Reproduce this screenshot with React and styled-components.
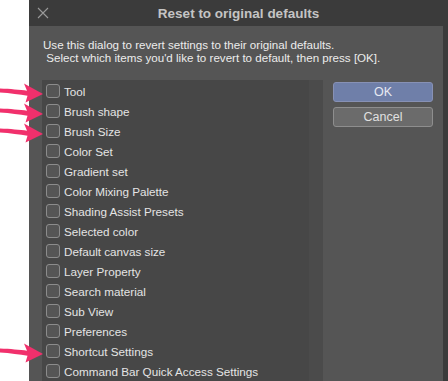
import React from "react";
import styled, { createGlobalStyle } from "styled-components";

const Global = createGlobalStyle`
  html, body { margin: 0; padding: 0; background: #ffffff; }
  body { font-family: "Liberation Sans", Arial, sans-serif; overflow: hidden; }
`;

const Page = styled.div`
  width: 448px;
  height: 381px;
  display: flex;
  overflow: hidden;
  background: #ffffff;
`;

const Gutter = styled.div`
  width: 29px;
  flex: none;
`;

const Dialog = styled.div`
  flex: 1;
  display: flex;
  flex-direction: column;
  background: #3b3b3b;
`;

const TitleBar = styled.div`
  height: 26px;
  flex: none;
  display: flex;
  align-items: center;
  position: relative;
  color: #c4c4c4;
  font-weight: bold;
  font-size: 13.5px;
  justify-content: center;
`;

const Close = styled.svg`
  position: absolute;
  left: 8px;
  top: 7px;
`;

const Body = styled.div`
  flex: 1;
  margin-right: 5px;
  background: #555555;
  padding: 12px 0 0 14px;
  display: flex;
  flex-direction: column;
  min-height: 0;
`;

const Intro = styled.p`
  margin: 0;
  color: #ececec;
  font-size: 11.6px;
  line-height: 13px;
  white-space: pre;
`;

const Main = styled.div`
  flex: 1;
  display: flex;
  gap: 10px;
  margin-top: 16px;
  min-height: 0;
`;

const ListPanel = styled.div`
  width: 281px;
  flex: none;
  display: flex;
  background: #474747;
  margin-left: -1px;
`;

const List = styled.ul`
  flex: 1;
  list-style: none;
  margin: 0;
  padding: 1px 0 0 4px;
`;

const Scrollbar = styled.div`
  width: 14px;
  background: #4b4b4b;
`;

const Row = styled.li`
  position: relative;
  height: 20px;
  display: flex;
  align-items: center;
  gap: 4px;
  color: #e4e4e4;
  font-size: 11.7px;
  white-space: nowrap;
`;

const Box = styled.span`
  width: 14px;
  height: 14px;
  flex: none;
  box-sizing: border-box;
  border: 1px solid #8c8c8c;
  border-radius: 3px;
  background: #555555;
`;

const Arrow = styled.svg`
  position: absolute;
  left: -46px;
  top: -3px;
  pointer-events: none;
`;

const Buttons = styled.div`
  display: flex;
  flex-direction: column;
  gap: 5px;
  padding-top: 2px;
  width: 100px;
`;

const Button = styled.button`
  height: 20px;
  box-sizing: border-box;
  border-radius: 3px;
  font-family: inherit;
  font-size: 12.5px;
  padding: 0;
  color: ${(p) => (p.$primary ? "#e6e9f2" : "#e0e0e0")};
  background: ${(p) => (p.$primary ? "#6f7fa9" : "#6b6b6b")};
  border: 1px solid ${(p) => (p.$primary ? "#8791b5" : "#8e8e8e")};
`;

const items = [
  ["Tool", true],
  ["Brush shape", true],
  ["Brush Size", true],
  ["Color Set", false],
  ["Gradient set", false],
  ["Color Mixing Palette", false],
  ["Shading Assist Presets", false],
  ["Selected color", false],
  ["Default canvas size", false],
  ["Layer Property", false],
  ["Search material", false],
  ["Sub View", false],
  ["Preferences", false],
  ["Shortcut Settings", true],
  ["Command Bar Quick Access Settings", false],
];

function PinkArrow() {
  return (
    <Arrow width="46" height="28" viewBox="0 0 46 28">
      <path
        d="M0 10.6 C10 11 20 11.8 27 12.8 L24 5.5 L43 16 L25.5 24.5 L27.5 17.8 C20 16.8 10 15.2 0 14.6 Z"
        fill="#f1306c"
      />
    </Arrow>
  );
}

export default function App() {
  return (
    <Page>
      <Global />
      <Gutter />
      <Dialog>
        <TitleBar>
          <Close width="12" height="12" viewBox="0 0 12 12">
            <path d="M1 1 L11 11 M11 1 L1 11" stroke="#9a9a9a" strokeWidth="1.1" fill="none" />
          </Close>
          Reset to original defaults
        </TitleBar>
        <Body>
          <Intro>
            {"Use this dialog to revert settings to their original defaults.\n Select which items you'd like to revert to default, then press [OK]."}
          </Intro>
          <Main>
            <ListPanel>
              <List>
                {items.map(([label, marked]) => (
                  <Row key={label}>
                    {marked && <PinkArrow />}
                    <Box />
                    {label}
                  </Row>
                ))}
              </List>
              <Scrollbar />
            </ListPanel>
            <Buttons>
              <Button $primary>OK</Button>
              <Button>Cancel</Button>
            </Buttons>
          </Main>
        </Body>
      </Dialog>
    </Page>
  );
}
